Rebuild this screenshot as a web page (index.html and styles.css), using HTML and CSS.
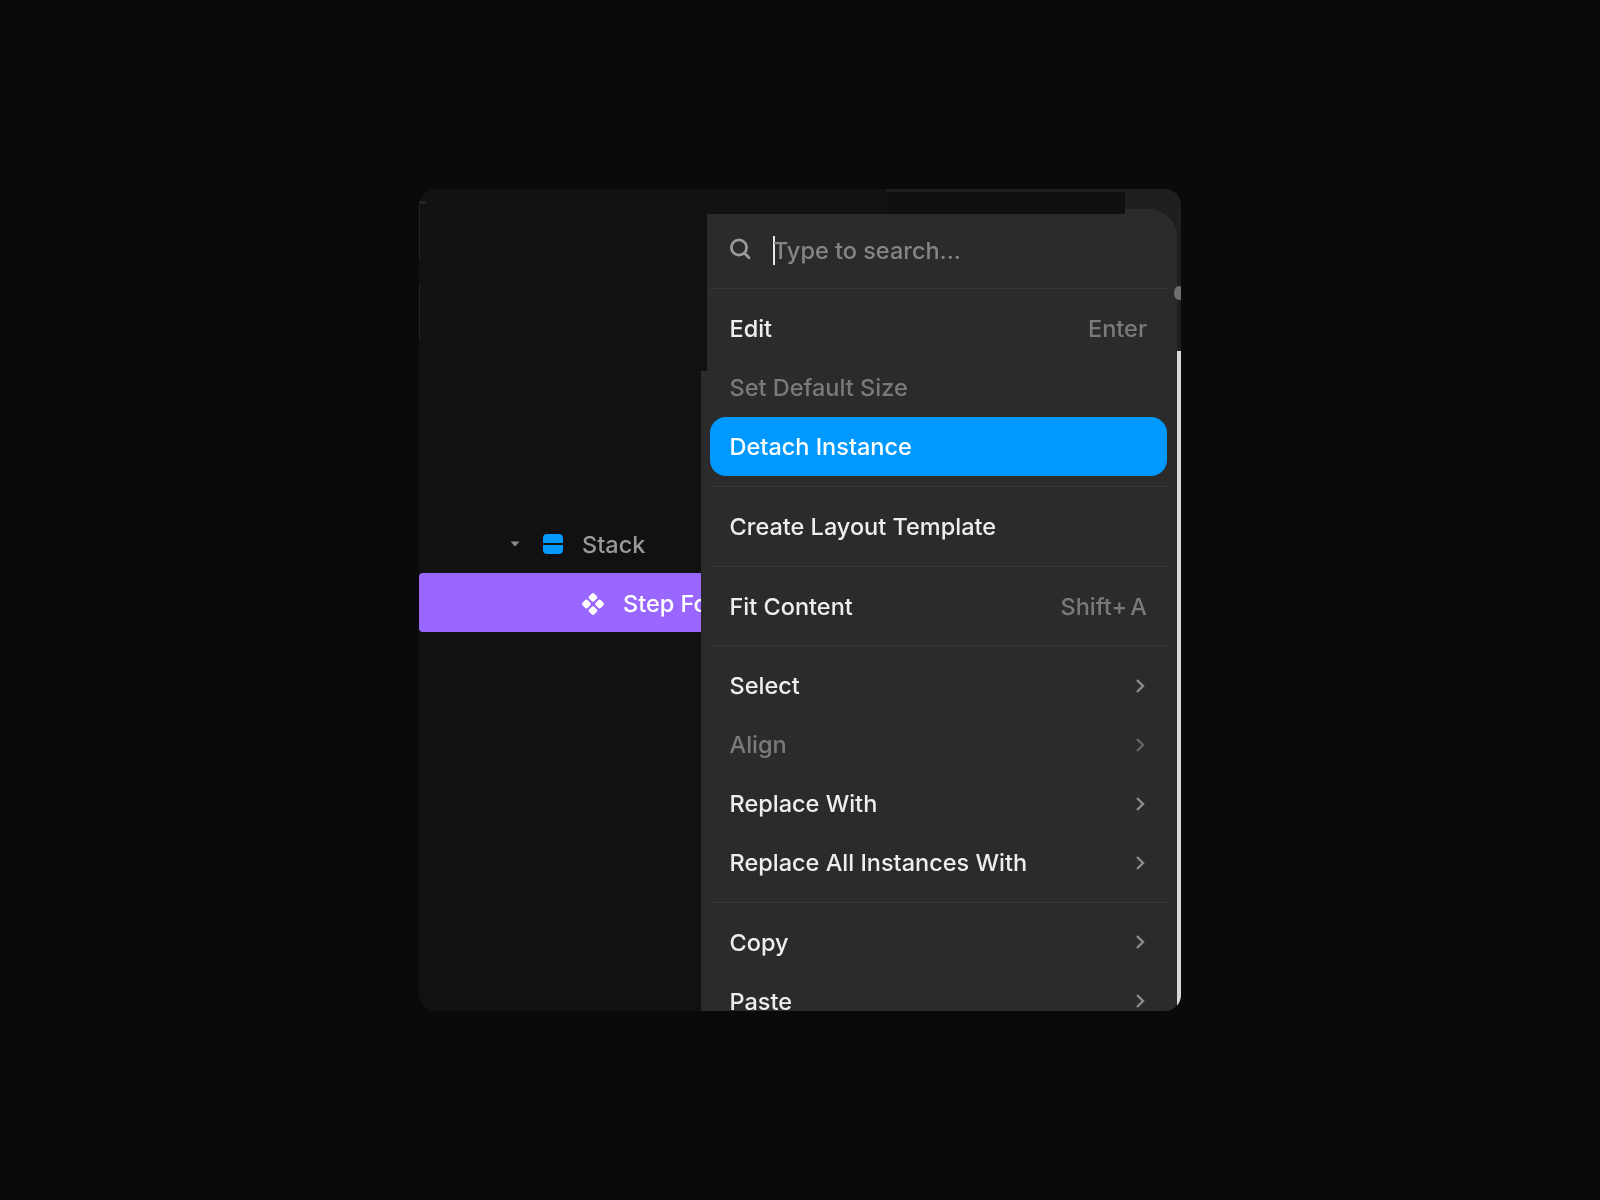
FILE: index.html
```html
<!DOCTYPE html>
<html lang="en">
<head>
    <meta charset="UTF-8">
    <title>layer context menu</title>
    <link rel="stylesheet" href="styles.css">
</head>
<body>
    <div class="window">
        <div class="edgeBar"></div>
        <div class="scrollThumb"></div>
        <div class="edgeMark markTop"></div>
        <div class="edgeMark markLow"></div>

        <div class="layers">
            <div class="layerRow layerParent">
                <svg class="caret" width="10" height="6" viewBox="0 0 10 6"><path d="M0.5 0.5h9L5 5.5z" fill="#8c8c8c"/></svg>
                <svg class="stackIcon" width="20" height="20" viewBox="0 0 20 20"><path d="M4 0h12a4 4 0 0 1 4 4v5H0V4a4 4 0 0 1 4-4zM0 11h20v5a4 4 0 0 1-4 4H4a4 4 0 0 1-4-4z" fill="#0099ff"/></svg>
                <span>Stack</span>
            </div>
            <div class="layerRow layerSelected">
                <svg class="compIcon" width="22" height="22" viewBox="0 0 22 22"><g fill="#fff"><rect x="7.4" y="0.8" width="7.2" height="7.2" rx="2" transform="rotate(45 11 4.4)"/><rect x="7.4" y="14" width="7.2" height="7.2" rx="2" transform="rotate(45 11 17.6)"/><rect x="0.8" y="7.4" width="7.2" height="7.2" rx="2" transform="rotate(45 4.4 11)"/><rect x="14" y="7.4" width="7.2" height="7.2" rx="2" transform="rotate(45 17.6 11)"/></g></svg>
                <span>Step Form</span>
            </div>
        </div>

        <div class="menuNotch"></div>
        <div class="menu">
            <div class="search">
                <svg class="searchIcon" width="24" height="24" viewBox="0 0 24 24" fill="none" stroke="#999" stroke-width="2.8" stroke-linecap="round"><circle cx="11" cy="10.5" r="7.6"/><path d="M16.6 16.2l4.4 4.6"/></svg>
                <span class="caretLine"></span>
                <span class="placeholder">Type to search...</span>
            </div>

            <div class="group">
                <div class="item"><span>Edit</span><span class="hint">Enter</span></div>
                <div class="item off"><span>Set Default Size</span></div>
                <div class="item active"><span>Detach Instance</span></div>
            </div>
            <div class="group">
                <div class="item"><span>Create Layout Template</span></div>
            </div>
            <div class="group">
                <div class="item"><span>Fit Content</span><span class="hint hintKeys">Shift+ A</span></div>
            </div>
            <div class="group">
                <div class="item"><span>Select</span><svg class="chev" width="10" height="16" viewBox="0 0 10 16"><path d="M2 2l6 6-6 6"/></svg></div>
                <div class="item off"><span>Align</span><svg class="chev" width="10" height="16" viewBox="0 0 10 16"><path d="M2 2l6 6-6 6"/></svg></div>
                <div class="item"><span>Replace With</span><svg class="chev" width="10" height="16" viewBox="0 0 10 16"><path d="M2 2l6 6-6 6"/></svg></div>
                <div class="item"><span>Replace All Instances With</span><svg class="chev" width="10" height="16" viewBox="0 0 10 16"><path d="M2 2l6 6-6 6"/></svg></div>
            </div>
            <div class="group">
                <div class="item"><span>Copy</span><svg class="chev" width="10" height="16" viewBox="0 0 10 16"><path d="M2 2l6 6-6 6"/></svg></div>
                <div class="item"><span>Paste</span><svg class="chev" width="10" height="16" viewBox="0 0 10 16"><path d="M2 2l6 6-6 6"/></svg></div>
            </div>
        </div>

        <div class="strip"></div>
        <div class="edgePip"></div>
    </div>
</body>
</html>
```

FILE: styles.css
```css
html, body {
    margin: 0;
    height: 100%;
}
body {
    background: #0a0a0a;
    font-family: Inter, "Liberation Sans", sans-serif;
    font-weight: 500;
    font-size: 23.5px;
    position: relative;
    height: 1200px;
    overflow: hidden;
}
.window {
    position: absolute;
    left: 419px;
    top: 189px;
    width: 762px;
    height: 822px;
    background: #111111;
    border-radius: 16px;
    overflow: hidden;
    filter: blur(0.7px);
}
.strip {
    position: absolute;
    left: 467px;
    top: 3px;
    width: 239px;
    height: 22px;
    background: #101010;
    box-shadow: 0 -3px 0 #1f1f1f;
}
/* covers the top of the menu left of the strip */
.strip::before {
    content: "";
    position: absolute;
    left: -179px;
    top: -3px;
    width: 179px;
    height: 25px;
    background: #111111;
}
.edgeBar {
    position: absolute;
    right: 0;
    top: 0;
    width: 60px;
    height: 162px;
    background: #1f1f1f;
}
.edgePip {
    position: absolute;
    right: -3px;
    top: 97px;
    width: 10px;
    height: 14px;
    border-radius: 50%;
    background: #6e6e6e;
}
.scrollThumb {
    position: absolute;
    right: 0;
    top: 162px;
    bottom: 0;
    width: 4px;
    background: #d8d8d8;
}
.edgeMark {
    position: absolute;
    left: 0;
    width: 1px;
    background: #232323;
}
.markTop {
    top: 12px;
    height: 58px;
}
.markTop::after {
    content: "";
    position: absolute;
    left: 0;
    top: 0;
    width: 7px;
    height: 3px;
    background: #232323;
}
.markLow {
    top: 94px;
    height: 56px;
}
.layers {
    padding-top: 325px;
    display: flex;
    flex-direction: column;
}
.layerRow {
    height: 59px;
    display: flex;
    align-items: center;
    white-space: nowrap;
}
.layerRow span {
    padding-top: 2px;
}
.layerParent {
    color: #999999;
    padding-left: 91px;
}
.caret {
    margin-right: 23px;
}
.stackIcon {
    margin-right: 19px;
}
.layerSelected {
    background: #9966ff;
    color: #ffffff;
    padding-left: 163px;
    border-radius: 4px 0 0 4px;
}
.compIcon {
    margin: 2px 19px 0 0;
}
.menuNotch {
    position: absolute;
    left: 282px;
    top: 182px;
    width: 20px;
    bottom: 0;
    background: #2b2b2b;
}
.menu {
    position: absolute;
    left: 288px;
    top: 20px;
    width: 470px;
    height: 900px;
    background: #2b2b2b;
    border-radius: 0 28px 0 0;
    color: #eeeeee;
    box-sizing: border-box;
    padding: 0 10px 0 3px;
}
.search {
    height: 79px;
    box-sizing: border-box;
    padding: 3px 0 0 18px;
    display: flex;
    align-items: center;
    color: #858585;
}
.searchIcon {
    margin: 0 21px 3px 0;
}
.caretLine {
    width: 2px;
    height: 29px;
    background: #e8e8e8;
    margin-right: -2px;
}
.group {
    border-top: 1px solid #383838;
    padding: 10px 0;
}
.item {
    height: 58.9px;
    display: flex;
    align-items: center;
    justify-content: space-between;
    padding: 0 20px 0 19.5px;
    border-radius: 16px;
    white-space: nowrap;
}
.item.off {
    color: #7a7a7a;
}
.item.off .chev {
    opacity: 0.6;
}
.item.active {
    background: #0099ff;
    color: #ffffff;
}
.hint {
    color: #7a7a7a;
}
.hintKeys {
    word-spacing: -3px;
}
.chev {
    fill: none;
    stroke: #8c8c8c;
    stroke-width: 2.4;
    margin-right: 2px;
}
```
